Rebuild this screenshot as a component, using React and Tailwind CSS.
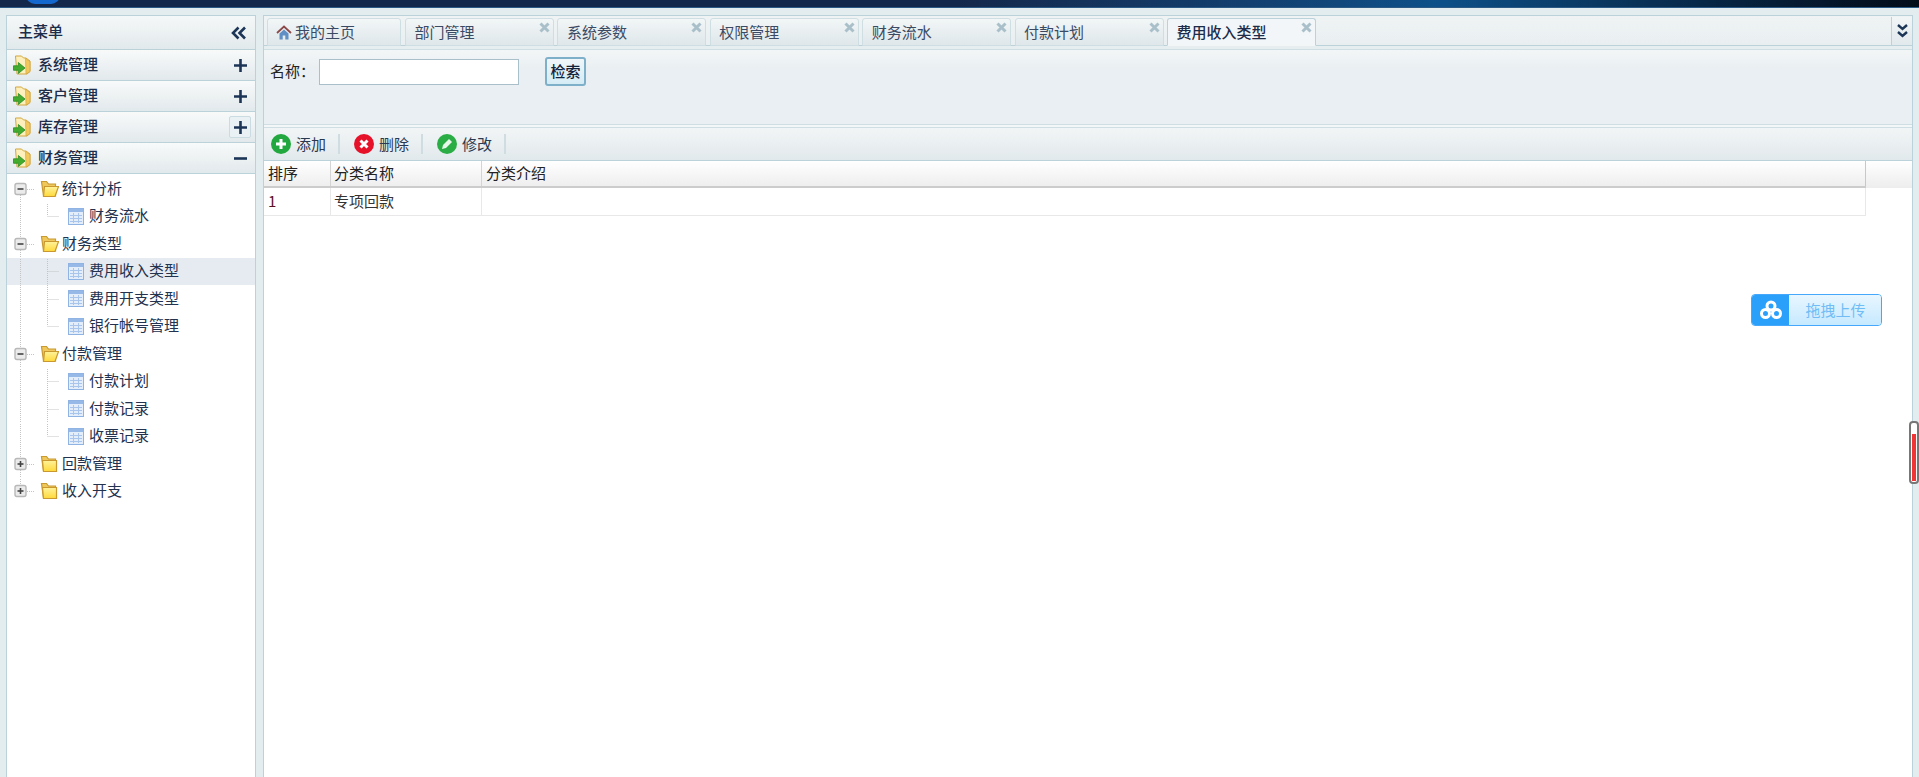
import { useState } from "react";

const FONT = { fontFamily: '"Noto Sans CJK SC", "Liberation Sans", sans-serif' };

const TABS = [
  { label: "部门管理" },
  { label: "系统参数" },
  { label: "权限管理" },
  { label: "财务流水" },
  { label: "付款计划" },
  { label: "费用收入类型", active: true },
];

const TREE = [
  { label: "统计分析", open: true, guide: true, down: true },
  { label: "财务流水", leaf: true, last: true },
  { label: "财务类型", open: true, guide: true, down: true, up: true },
  { label: "费用收入类型", leaf: true, selected: true },
  { label: "费用开支类型", leaf: true },
  { label: "银行帐号管理", leaf: true, last: true },
  { label: "付款管理", open: true, guide: true, down: true, up: true },
  { label: "付款计划", leaf: true },
  { label: "付款记录", leaf: true },
  { label: "收票记录", leaf: true, last: true },
  { label: "回款管理", down: true, up: true },
  { label: "收入开支", up: true },
];

function FolderArrow() {
  return (
    <svg width="18" height="20" viewBox="0 0 18 20" className="shrink-0">
      <path d="M2.5 1h6l2 2h2.5l4 3v10.5l-3 2.5H4z" fill="#fdf0bd" stroke="#d2a63f" />
      <path d="M12.5 3.5l4.5 3v10l-4 2.5z" fill="#f2c75c" stroke="#cf9f38" strokeWidth="0.6" />
      <path d="M0.5 10.8h4.8V7.5L12 13l-6.7 5.5v-3.2H0.5z" fill="#43ab2e" stroke="#2a8a22" strokeWidth="0.8" />
    </svg>
  );
}

function OpenFolder({ open }) {
  return (
    <svg width="19" height="18" viewBox="0 0 19 18" className="shrink-0">
      <defs>
        <linearGradient id="folder-face" x1="0" y1="0" x2="0" y2="1">
          <stop offset="0" stopColor="#fff29a" />
          <stop offset="1" stopColor="#ffd93a" />
        </linearGradient>
      </defs>
      <path d="M1.5 1.5h5l2 2.5h7v12H3.5z" fill="#efc75a" stroke="#c79a32" strokeWidth="1.2" />
      {open ? (
        <path d="M4.5 6.5h14l-3.5 10H3.5z" fill="url(#folder-face)" stroke="#c9992f" strokeWidth="1.2" />
      ) : (
        <path d="M2.5 5.5h14v11h-13z" fill="url(#folder-face)" stroke="#c9992f" strokeWidth="1.2" />
      )}
    </svg>
  );
}

function TableIcon() {
  return (
    <svg width="16" height="17" viewBox="0 0 16 17" className="shrink-0">
      <rect x="0.5" y="0.5" width="15" height="16" fill="#e4edfa" stroke="#8fb3e2" />
      <rect x="1" y="1" width="14" height="3" fill="#96b9e8" />
      <path d="M2 7.5h12M2 10.5h12M2 13.5h12M5.5 5v10M10.5 5v10" stroke="#a9c5ec" fill="none" />
    </svg>
  );
}

// Indent column of a tree row: dotted guides plus the expand box
function TreeLines({ node }) {
  const dots = { stroke: "#c4c4c4", strokeDasharray: "1 1", fill: "none" };
  if (node.leaf) {
    return (
      <svg width="61" height="28" viewBox="0 0 61 28" className="shrink-0">
        <path d="M13.5 0v28" style={dots} />
        <path d={node.last ? "M40.5 0v14" : "M40.5 0v28"} style={dots} />
        <path d="M40.5 14.5h12" style={dots} />
      </svg>
    );
  }
  return (
    <svg width="33" height="28" viewBox="0 0 33 28" className="shrink-0">
      {node.up && <path d="M13.5 0v8" style={dots} />}
      {node.down && <path d="M13.5 20v8" style={dots} />}
      <path d="M20 14.5h7" style={dots} />
      <rect x="8" y="8.5" width="11" height="11" rx="2" fill="#ebebeb" stroke="#b8b8b8" strokeWidth="1.4" />
      <path d="M10.5 14h6" stroke="#444" strokeWidth="1.6" />
      {!node.open && <path d="M13.5 11v6" stroke="#444" strokeWidth="1.6" />}
    </svg>
  );
}

function MenuHeader({ label, open, hovered }) {
  return (
    <div className="flex h-[31px] items-center border-b border-[#bcd2da] bg-gradient-to-b from-[#f8fafa] to-[#e2e9ec] pl-[6px] pr-[4px]">
      <FolderArrow />
      <span className="ml-[7px] flex-1 pb-[2px] text-[15px] font-medium text-[#1d2c48]">{label}</span>
      <span
        className={`flex h-[22px] w-[22px] items-center justify-center rounded-[2px] border ${
          hovered ? "border-[#cbdbe2] bg-[#e9f1f5]" : "border-transparent"
        }`}
      >
        <svg width="13" height="13" viewBox="0 0 13 13">
          <path d={open ? "M0 6.5h13" : "M0 6.5h13M6.5 0v13"} stroke="#1c3557" strokeWidth="2.6" />
        </svg>
      </span>
    </div>
  );
}

function Sidebar() {
  return (
    <aside className="flex w-[250px] shrink-0 flex-col border border-b-0 border-[#bcd2da] bg-white">
      <div className="flex h-[34px] items-center justify-between border-b border-[#bcd2da] bg-gradient-to-b from-[#f5f8f8] to-[#e2e9ec] pl-[11px] pr-[8px]">
        <span className="pb-[2px] text-[15px] font-medium text-[#1d2c48]">主菜单</span>
        <svg width="16" height="14" viewBox="0 0 16 14">
          <path d="M7.5 1.5L2 7l5.5 5.5M14 1.5L8.5 7l5.5 5.5" fill="none" stroke="#1c3557" strokeWidth="2.6" />
        </svg>
      </div>
      <MenuHeader label="系统管理" />
      <MenuHeader label="客户管理" />
      <MenuHeader label="库存管理" hovered />
      <MenuHeader label="财务管理" open />
      <div className="pt-[1px]">
        {TREE.map((node) => (
          <div
            key={node.label}
            className={`flex h-[27.5px] items-center overflow-hidden ${node.selected ? "bg-[#e6ebf2]" : ""}`}
          >
            <TreeLines node={node} />
            {node.leaf ? <TableIcon /> : <OpenFolder open={node.open} />}
            <span className={`pb-[2px] text-[15px] text-[#23324e] ${node.leaf ? "ml-[5px]" : "ml-[3px]"}`}>
              {node.label}
            </span>
          </div>
        ))}
      </div>
    </aside>
  );
}

function CloseMark() {
  return (
    <svg width="11" height="11" viewBox="0 0 11 11" className="absolute right-[3px] top-[3px]">
      <path d="M1.5 1.5l8 8M9.5 1.5l-8 8" stroke="#a9c0ca" strokeWidth="3" />
    </svg>
  );
}

function TabBar() {
  return (
    <div className="flex h-[30px] items-end border-b border-[#bcd2da] bg-gradient-to-b from-[#eff3f4] to-[#e9eff1] pl-[3px]">
      <div className="mb-[-1px] mr-[4px] flex h-[28px] w-[134px] items-center rounded-t-[3px] border border-[#cfdee3] bg-gradient-to-b from-[#f2f6f7] to-[#dfe7ea] pl-[8px] text-[15px] text-[#3b4a63]">
        <svg width="16" height="15" viewBox="0 0 16 15" className="mr-[3px]">
          <path d="M1 8L8 1.5 15 8" fill="none" stroke="#8b4a4a" strokeWidth="1.8" />
          <path d="M3.5 8.5v6h3.2v-4h2.6v4h3.2v-6L8 4.5z" fill="#5f8fc4" />
        </svg>
        我的主页
      </div>
      {TABS.map((tab) => (
        <div
          key={tab.label}
          className={`relative mb-[-1px] mr-[3.4px] flex h-[28px] w-[149px] items-center rounded-t-[3px] border pl-[8.5px] text-[15px] ${
            tab.active
              ? "border-[#bcd2da] border-b-[#f2f6f7] bg-[#f2f6f8] font-medium text-[#1d2c48]"
              : "border-[#cfdee3] bg-gradient-to-b from-[#f2f6f7] to-[#dfe7ea] text-[#3b4a63]"
          }`}
        >
          {tab.label}
          <CloseMark />
        </div>
      ))}
      <div className="ml-auto flex h-[28px] w-[21px] items-center justify-center self-end border-l border-[#bcd2da] bg-gradient-to-b from-[#f1f5f6] to-[#e2e9ec]">
        <svg width="11" height="14" viewBox="0 0 11 14">
          <path d="M1 1l4.5 4L10 1M1 8l4.5 4L10 8" fill="none" stroke="#1c3557" strokeWidth="2.4" />
        </svg>
      </div>
    </div>
  );
}

function SearchPanel() {
  const [name, setName] = useState("");
  return (
    <div className="h-[76px] border-y border-[#cfdee3] bg-gradient-to-b from-[#f3f6f7] to-[#e9eff2] to-[25%]">
      <div className="flex items-start pl-[6px] pt-[7px] text-[15px] text-[#222]">
        <span className="mt-[3px] w-[49px]">名称：</span>
        <input
          value={name}
          onChange={(e) => setName(e.target.value)}
          className="mt-[2px] h-[26px] w-[200px] border border-[#a9c0cb] bg-white outline-none"
        />
        <button className="ml-[26px] h-[29px] w-[41px] rounded-[3px] border-2 border-[#7fb0ca] bg-gradient-to-b from-[#f0f6f9] to-[#d5ecf5] text-[15px] font-medium text-[#14233c]">
          检索
        </button>
      </div>
    </div>
  );
}

function ToolButton({ label, color, icon }) {
  return (
    <>
      <span className="ml-[7px] mr-[12px] flex items-center">
        <svg width="20" height="20" viewBox="0 0 20 20" className="mr-[5px]">
          <circle cx="10" cy="10" r="10" fill={color} />
          {icon}
        </svg>
        <span className="text-[15px] text-[#2a3850]">{label}</span>
      </span>
      <span className="mr-[7px] h-[20px] w-[2px] bg-[#cfdde3]" />
    </>
  );
}

function Toolbar() {
  return (
    <div className="flex h-[33px] items-center border-b border-[#bcd2da] bg-gradient-to-b from-[#f2f5f6] to-[#e2e9ec] pl-0">
      <ToolButton
        label="添加"
        color="#22a83e"
        icon={<path d="M10 5v10M5 10h10" stroke="#fff" strokeWidth="3" />}
      />
      <ToolButton
        label="删除"
        color="#e5122a"
        icon={<path d="M6.5 6.5l7 7M13.5 6.5l-7 7" stroke="#fff" strokeWidth="3" />}
      />
      <ToolButton
        label="修改"
        color="#2bad45"
        icon={<path d="M5 15l1-4 6-6 3 3-6 6z" fill="#e7f7ea" />}
      />
    </div>
  );
}

function DataGrid() {
  const cols = "grid grid-cols-[67px_151px_1384px]";
  return (
    <div className="text-[15px]">
      <div className="flex h-[27px] bg-gradient-to-b from-white to-[#ededed]">
        <div className={`${cols} border-b-2 border-[#cccccc] text-[#222]`}>
          <div className="border-r border-[#d4d4d4] pl-[4px] leading-[24px]">排序</div>
          <div className="border-r border-[#d4d4d4] pl-[3px] leading-[24px]">分类名称</div>
          <div className="border-r border-[#c8c8c8] pl-[4px] leading-[24px]">分类介绍</div>
        </div>
      </div>
      <div className={`${cols} h-[28px] w-fit border-b border-[#e8e8e8]`}>
        <div className="border-r border-[#e8e8e8] pl-[4px] leading-[26px] text-[#5c1020]">1</div>
        <div className="border-r border-[#e8e8e8] pl-[3px] leading-[26px] text-[#333]">专项回款</div>
        <div className="border-r border-[#e8e8e8]" />
      </div>
    </div>
  );
}

function UploadWidget() {
  return (
    <div className="absolute left-[1751px] top-[294px] flex h-[32px] w-[131px] overflow-hidden rounded-[4px] border border-[#45a8fb]">
      <div className="flex w-[37px] items-center justify-center bg-[#2aa0fb]">
        <svg width="26" height="22" viewBox="0 0 26 22">
          <g fill="none" stroke="#fff" strokeWidth="3">
            <circle cx="13" cy="7" r="4" />
            <circle cx="7.5" cy="14.5" r="4" />
            <circle cx="18.5" cy="14.5" r="4" />
          </g>
        </svg>
      </div>
      <div className="flex flex-1 items-center justify-center bg-gradient-to-b from-[#e8f6ff] to-[#c6e9ff] pl-[1px] text-[15px] text-[#70bdf6]">
        拖拽上传
      </div>
    </div>
  );
}

function ScrollMarker() {
  return (
    <div className="absolute left-[1909px] top-[421px] h-[63px] w-[10px] rounded-[4px] border-2 border-[#777] bg-white">
      <div className="mx-auto mt-[11px] h-[47px] w-[4px] bg-[#ef3535]" />
    </div>
  );
}

export default function App() {
  return (
    <div className="relative h-screen w-full overflow-hidden bg-[#e3ecee]" style={FONT}>
      <header className="relative h-[8px] overflow-hidden border-b border-[#2a5a85] bg-gradient-to-r from-[#14284b] from-[50%] via-[#0d5089] via-[75%] to-[#030b18]">
        <div className="absolute left-[26px] top-[-14px] h-[18px] w-[34px] rounded-full bg-[#1467cc]" />
      </header>
      <div className="flex h-[769px] pl-[6px] pr-[6px] pt-[7px]">
        <Sidebar />
        <main className="ml-[7px] flex min-w-0 flex-1 flex-col border border-b-0 border-[#bcd2da] bg-white">
          <TabBar />
          <div className="h-[3px] bg-[#e6eef0]" />
          <SearchPanel />
          <div className="h-[3px] border-b border-[#cfdee3] bg-[#f4f7f8]" />
          <Toolbar />
          <DataGrid />
        </main>
      </div>
      <UploadWidget />
      <ScrollMarker />
    </div>
  );
}
